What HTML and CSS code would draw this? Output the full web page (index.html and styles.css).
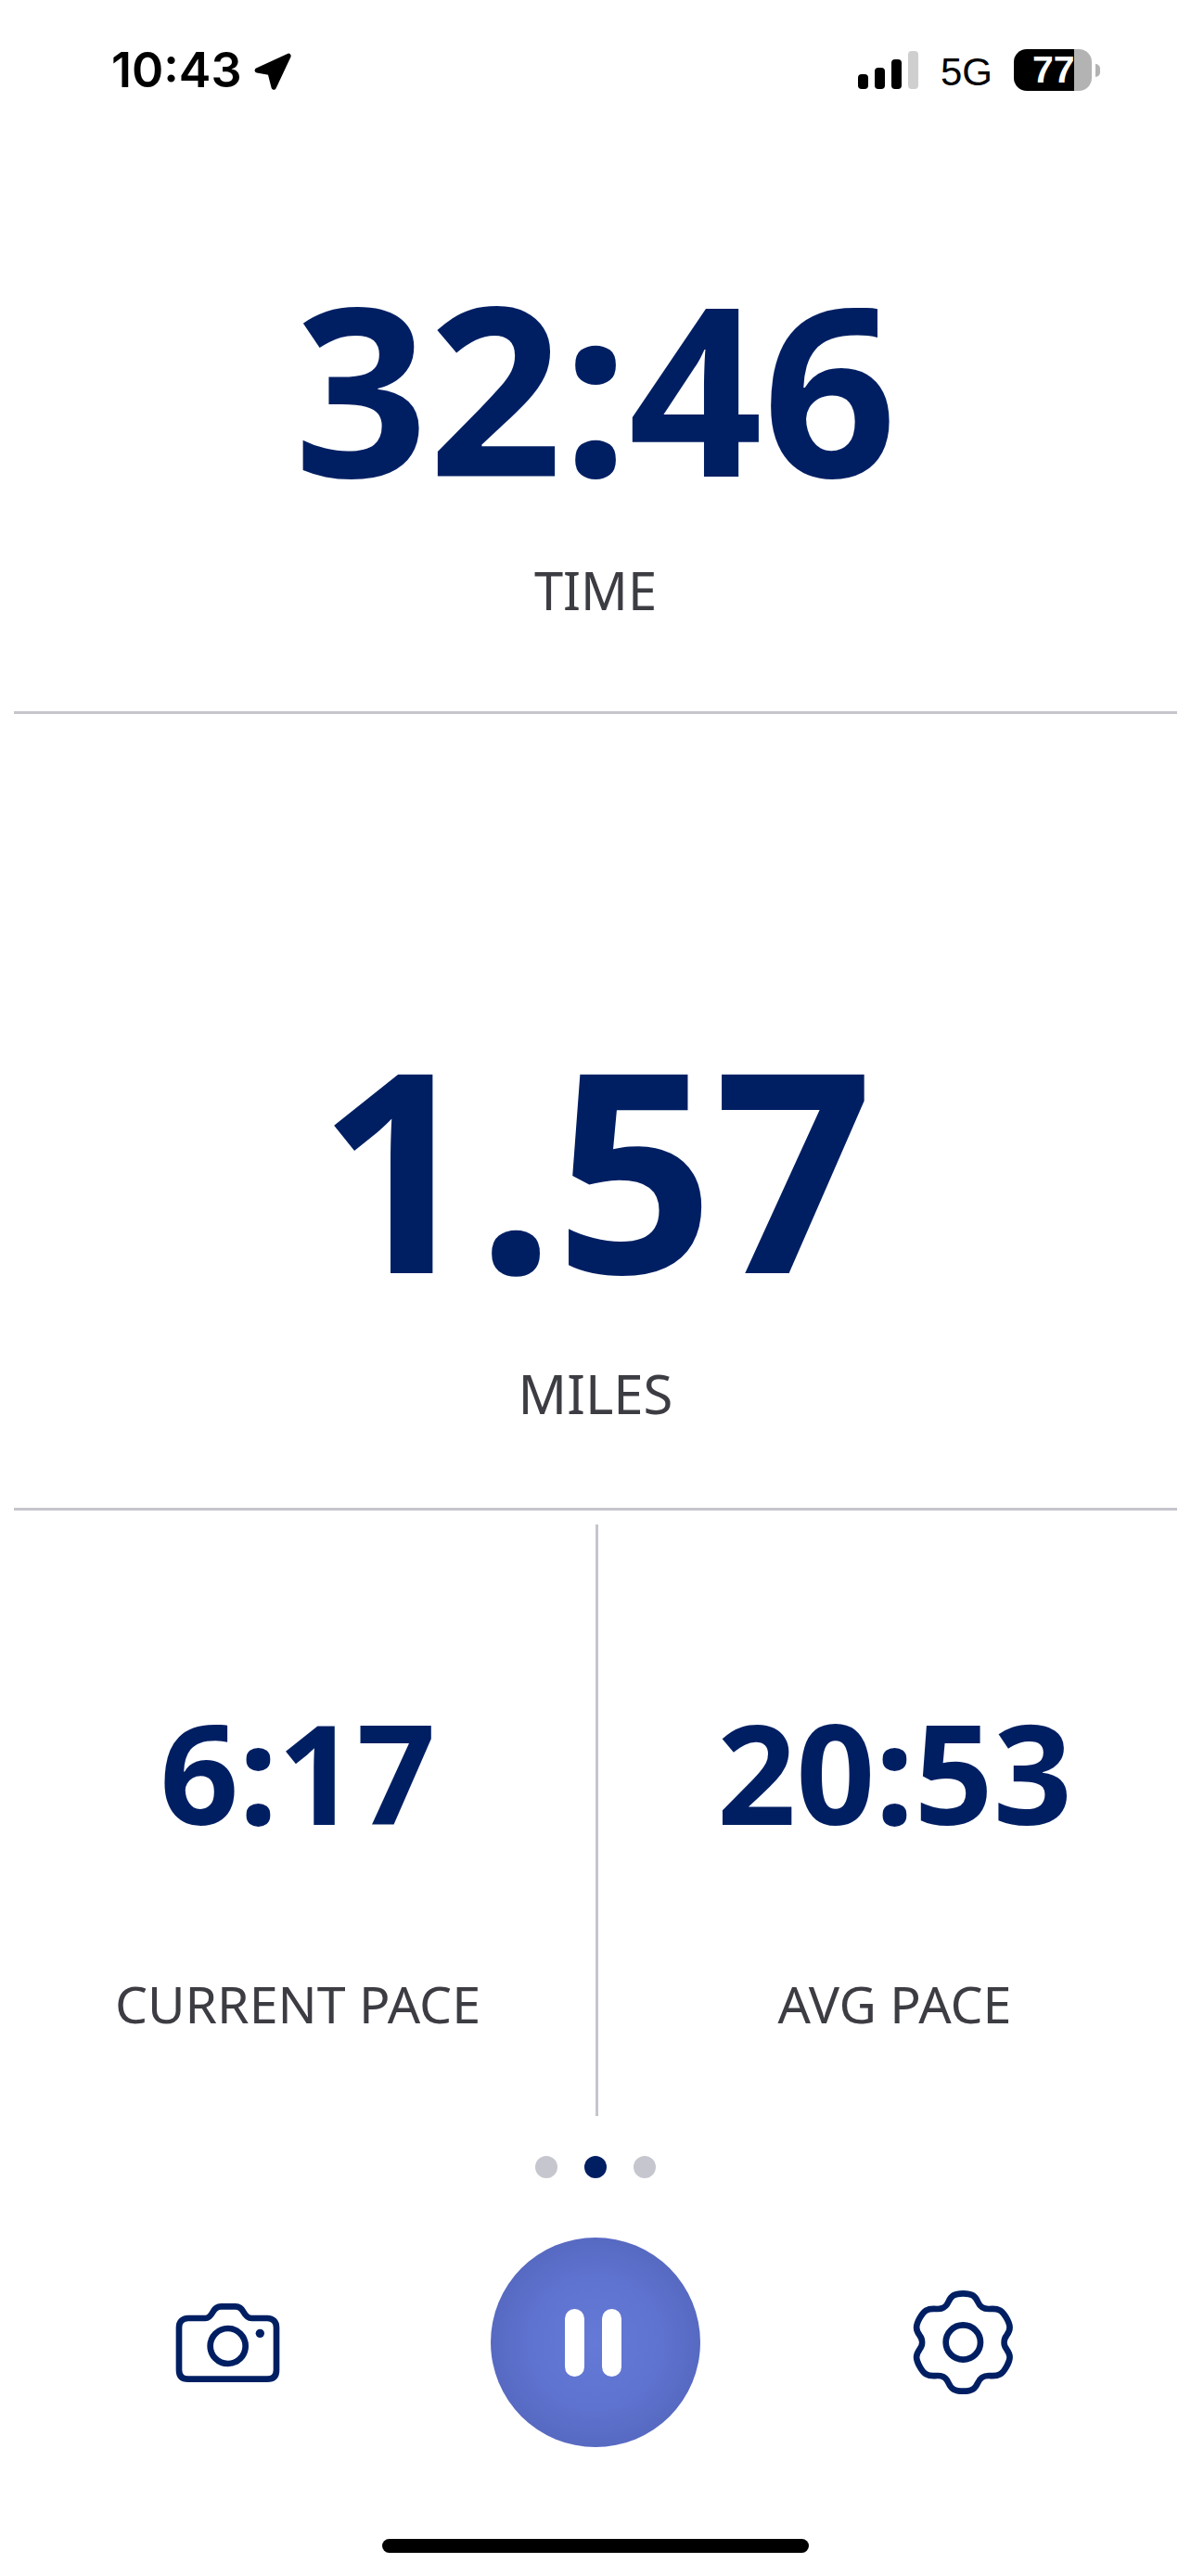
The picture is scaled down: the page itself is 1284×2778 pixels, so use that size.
FILE: index.html
```html
<!DOCTYPE html>
<html lang="en">
<head>
<meta charset="utf-8">
<title>Run</title>
<link rel="stylesheet" href="styles.css">
</head>
<body>
<div class="screen">
  <header class="status">
    <div class="status-left">
      <span class="clock">10:43</span>
      <svg class="loc" width="43" height="43" viewBox="590 108 130 128"><path d="M603 167 L705 120 L657 222 L645 175 Z" fill="#000" stroke="#000" stroke-width="16" stroke-linejoin="round"/></svg>
    </div>
    <div class="status-right">
      <div class="signal">
        <span class="bar b1"></span><span class="bar b2"></span><span class="bar b3"></span><span class="bar b4"></span>
      </div>
      <span class="net">5G</span>
      <div class="battery"><div class="batt-body"><span class="batt-text">77</span></div><span class="batt-tip"></span></div>
    </div>
  </header>
  <section class="metric time">
    <div class="value v-time">32:46</div>
    <div class="label label-time">TIME</div>
  </section>
  <section class="metric miles">
    <div class="value v-miles">1.57</div>
    <div class="label label-miles">MILES</div>
  </section>
  <section class="paces">
    <div class="pace"><div class="value v-pace">6:17</div><div class="label label-pace">CURRENT PACE</div></div>
    <div class="pace"><div class="value v-pace">20:53</div><div class="label label-pace">AVG PACE</div></div>
  </section>
  <div class="dots"><span class="dot"></span><span class="dot on"></span><span class="dot"></span></div>
  <div class="controls">
    <div class="ctl-left">
      <svg class="cam" width="113" height="85" viewBox="90 130 335 255" fill="none" stroke="#001f63" stroke-width="20" stroke-linejoin="round"><path d="M130 178 H185 C198 178 204 168 210 157 C216 145 224 140 236 140 H282 C294 140 302 145 308 157 C314 168 322 178 335 178 H385 C405 178 415 190 415 208 V345 C415 365 405 375 385 375 H130 C110 375 100 365 100 345 V208 C100 190 110 178 130 178 Z"/><circle cx="258" cy="268" r="57"/><circle cx="362" cy="227" r="14" fill="#001f63" stroke="none"/></svg>
    </div>
    <button class="pause"><span class="pbar"></span><span class="pbar"></span></button>
    <div class="ctl-right">
      <svg class="gear" width="108" height="112" viewBox="72 60 320 336" fill="none" stroke="#001f63" stroke-width="20" stroke-linejoin="round"><path d="M233 70 C262 70 272 78 280 96 C288 114 298 121 318 120 C350 117 360 126 373 149 C386 172 388 186 374 205 C363 219 363 237 374 251 C388 270 386 284 373 307 C360 330 350 339 318 336 C298 335 288 342 280 360 C272 378 262 386 233 386 C204 386 194 378 186 360 C178 342 168 335 148 336 C116 339 106 330 93 307 C80 284 78 270 92 251 C103 237 103 219 92 205 C78 186 80 172 93 149 C106 126 116 117 148 120 C168 121 178 114 186 96 C194 78 204 70 233 70 Z"/><circle cx="233" cy="228" r="56"/></svg>
    </div>
  </div>
  <div class="home"></div>
</div>
</body>
</html>
```
FILE: styles.css
```css
* { box-sizing: border-box; }
html, body { margin: 0; padding: 0; background: #fff; }
.screen { width: 1284px; height: 2778px; display: flex; flex-direction: column; font-family: "Noto Sans", sans-serif; overflow: hidden; }

.status { height: 132px; display: flex; justify-content: space-between; padding: 0 0 0 120px; flex: none; }
.status-left { display: flex; align-items: flex-start; padding-top: 50px; gap: 12px; }
.clock { font-family: Inter, sans-serif; font-weight: 600; font-size: 52px; line-height: 52px; color: #000; }
.loc { margin-top: 6px; }
.status-right { display: flex; align-items: flex-start; padding: 53px 98px 0 0; }
.signal { display: flex; gap: 7px; align-items: flex-end; height: 41px; margin-top: 2px; }
.bar { width: 11px; border-radius: 4px; background: #000; display: block; }
.b1 { height: 16px; }
.b2 { height: 23px; }
.b3 { height: 32px; }
.b4 { height: 41px; background: #cfcfcf; }
.net { font-family: "Liberation Sans", sans-serif; font-size: 42px; line-height: 42px; color: #000; margin: 4px 0 0 24px; }
.battery { display: flex; align-items: center; margin-left: 23px; }
.batt-body { width: 84px; height: 45px; border-radius: 14px; background: linear-gradient(to right, #000 0, #000 77%, #b3b3b3 77%); padding-left: 20px; }
.batt-text { font-family: "Liberation Sans", sans-serif; font-weight: 700; font-size: 41px; line-height: 45px; color: #fff; display: block; }
.batt-tip { width: 5px; height: 14px; background: #b3b3b3; border-radius: 0 7px 7px 0; margin-left: 4px; }

.metric { display: flex; flex-direction: column; align-items: center; border-bottom: 3px solid #c6c5cd; margin: 0 15px; flex: none; }
.time { height: 638px; padding-top: 158px; }
.miles { height: 859px; padding-top: 337px; }
.value { color: #001f63; font-family: "Noto Sans", sans-serif; font-weight: 750; }
.v-time { font-size: 253px; line-height: 253px; }
.v-miles { font-size: 300px; line-height: 300px; }
.v-pace { font-size: 149px; line-height: 149px; }
.label { color: #3c3c43; line-height: 60px; }
.label-time { font-size: 56px; margin-top: 63px; }
.label-miles { font-size: 58px; margin-top: 66px; }
.label-pace { font-size: 55.5px; margin-top: 146px; }

.paces { display: grid; grid-template-columns: 1fr 1fr; margin-top: 15px; height: 638px; flex: none; }
.pace { display: flex; flex-direction: column; align-items: center; padding-top: 192px; }
.pace + .pace { border-left: 3px solid #c6c5cd; }

.dots { display: flex; justify-content: center; gap: 29px; margin-top: 43px; flex: none; }
.dot { width: 24px; height: 24px; border-radius: 50%; background: #c6c6cf; }
.dot.on { background: #001f63; }

.controls { display: grid; grid-template-columns: 1fr auto 1fr; align-items: center; margin-top: 64px; height: 226px; flex: none; }
.ctl-left { display: flex; justify-content: flex-start; padding-left: 189px; }
.ctl-right { display: flex; justify-content: flex-end; padding-right: 192px; }
.pause { width: 226px; height: 226px; border-radius: 50%; border: 0; padding: 0 6px 0 0; display: flex; justify-content: center; align-items: center; gap: 19px; background: radial-gradient(circle, #6579d6 0%, #5e72cf 45%, #4f60b2 100%); }
.pbar { width: 21px; height: 73px; border-radius: 11px; background: #fff; display: block; }

.home { width: 460px; height: 15px; border-radius: 8px; background: #000; margin: 99px auto 0; flex: none; }
```
